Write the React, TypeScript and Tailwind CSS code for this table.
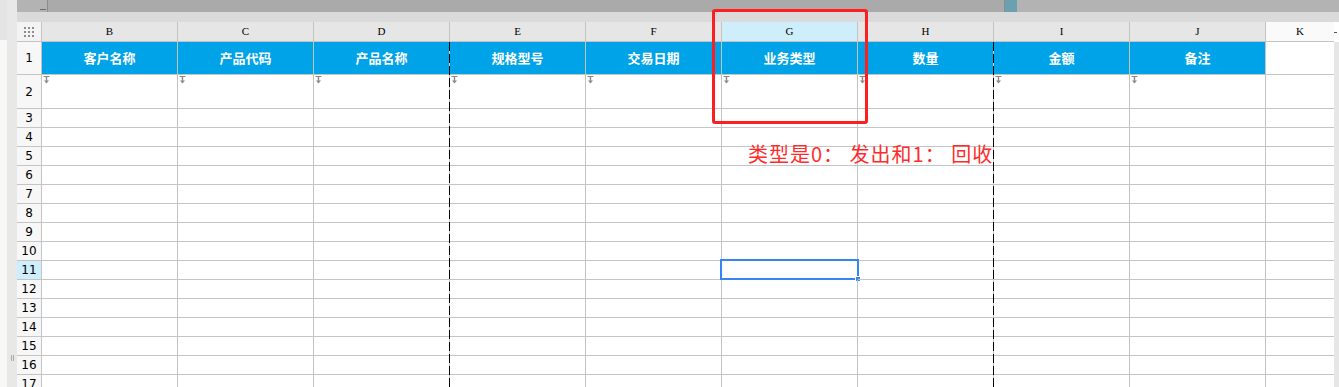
import type { ReactNode } from "react";

const COLUMNS = [
  { key: "B", title: "客户名称" },
  { key: "C", title: "产品代码" },
  { key: "D", title: "产品名称" },
  { key: "E", title: "规格型号" },
  { key: "F", title: "交易日期" },
  { key: "G", title: "业务类型" },
  { key: "H", title: "数量" },
  { key: "I", title: "金额" },
  { key: "J", title: "备注" },
];

const BODY_ROWS = [3, 4, 5, 6, 7, 8, 9, 10, 11, 12, 13, 14, 15, 16, 17];

const CJK = "font-['Noto_Sans_CJK_SC',sans-serif]";

function FilterArrow() {
  return (
    <svg width="7" height="8" viewBox="0 0 7 8" className="absolute left-[1px] top-[1px]">
      <path d="M0.5 0.5h6" stroke="#8a8a8a" strokeWidth="1" />
      <path d="M3.5 0.5v5" stroke="#8a8a8a" strokeWidth="1.4" />
      <path d="M1 4.5l2.5 3 2.5-3z" fill="#8a8a8a" />
    </svg>
  );
}

function RowHeader({ n, active, h }: { n: number; active?: boolean; h: string }) {
  return (
    <div
      className={`w-[25px] ${h} shrink-0 flex items-center justify-center border-r border-b border-[#c4c4c4] text-[12px] text-black font-['DejaVu_Sans',sans-serif] ${
        active ? "bg-[#cdeefa]" : "bg-[#f7f7f7]"
      }`}
    >
      {n}
    </div>
  );
}

function Cell({ children, className = "" }: { children?: ReactNode; className?: string }) {
  return <div className={`w-[136px] shrink-0 border-r border-b border-[#c4c4c4] relative ${className}`}>{children}</div>;
}

function PageBreak({ left }: { left: string }) {
  return (
    <div
      className={`absolute top-0 bottom-0 ${left} w-[1px] bg-[repeating-linear-gradient(to_bottom,#000_0_9px,transparent_9px_12px)]`}
    />
  );
}

export default function App() {
  return (
    <div className="relative w-[1339px] h-[387px] overflow-hidden bg-white flex">
      {/* window edge */}
      <div className="w-[17px] shrink-0 flex">
        <div className="w-[7px] flex flex-col">
          <div className="h-[40px] shrink-0 bg-[#e4e4e4]" />
          <div className="flex-1 bg-[#f8f8f6]" />
        </div>
        <div className="w-[10px] bg-[#e8e8e8] flex flex-col items-center justify-end pb-[26px]">
          <div className="flex gap-[1px]">
            <span className="w-[1px] h-[6px] bg-[#a8a8a8]" />
            <span className="w-[1px] h-[6px] bg-[#a8a8a8]" />
          </div>
        </div>
      </div>

      <div className="flex-1 flex flex-col min-h-0">
        {/* toolbar strip */}
        <div className="h-[12px] shrink-0 bg-[#b3b3b3] flex">
          <div className="w-[30px] flex items-end pb-[2px] justify-end pr-[1px]">
            <span className="w-[6px] h-[1px] bg-[#6f6f6f]" />
          </div>
          <div className="w-[958px] bg-[#aaaaaa] border-x border-[#8c8c8c]" />
          <div className="w-[12px] bg-[#6aa1b1]" />
          <div className="flex-1" />
        </div>
        <div className="h-[10px] shrink-0 bg-[#dadada]" />

        <div className="flex flex-1 min-h-0 overflow-hidden">
          <div className="w-[1317px] flex flex-col">
            {/* column letters */}
            <div className="flex h-[20px] shrink-0">
              <div className="w-[25px] shrink-0 bg-[#f3f3f3] border-r border-b border-[#c4c4c4] flex items-center justify-center">
                <div className="grid grid-cols-3 gap-[2px]">
                  {Array.from({ length: 9 }).map((_, i) => (
                    <span key={i} className="w-[2px] h-[2px] bg-[#8c8c8c]" />
                  ))}
                </div>
              </div>
              {COLUMNS.map((c) => (
                <div
                  key={c.key}
                  className={`w-[136px] shrink-0 border-r border-b border-[#c4c4c4] flex items-center justify-center text-[11px] text-black font-['Liberation_Serif',serif] ${
                    c.key === "G" ? "bg-[#cdeefa]" : "bg-[#e6e6e6]"
                  }`}
                >
                  {c.key}
                </div>
              ))}
              <div className="w-[68px] shrink-0 bg-[#fafafa] border-b border-[#c4c4c4] flex items-center justify-center text-[11px] text-black font-['Liberation_Serif',serif]">
                K
              </div>
            </div>

            <div className="relative flex-1 min-h-0">
              {/* row 1: titles */}
              <div className="flex h-[33px] shrink-0">
                <RowHeader n={1} h="h-[33px]" />
                {COLUMNS.map((c) => (
                  <Cell key={c.key} className="bg-[#00a3e8] flex items-center justify-center">
                    <span className={`${CJK} text-[13px] font-bold text-white`}>{c.title}</span>
                  </Cell>
                ))}
                <div className="w-[68px] shrink-0 border-b border-[#c4c4c4]" />
              </div>

              {/* row 2: filter row */}
              <div className="flex h-[34px] shrink-0">
                <RowHeader n={2} h="h-[34px]" />
                {COLUMNS.map((c) => (
                  <Cell key={c.key}>
                    <FilterArrow />
                  </Cell>
                ))}
                <div className="w-[68px] shrink-0 border-b border-[#c4c4c4]" />
              </div>

              {BODY_ROWS.map((n) => (
                <div key={n} className="flex h-[19px] shrink-0">
                  <RowHeader n={n} h="h-[19px]" active={n === 11} />
                  {COLUMNS.map((c) => (
                    <Cell key={c.key}>
                      {n === 11 && c.key === "G" && (
                        <div className="absolute left-[-2px] top-[-2px] w-[139px] h-[21px] border-2 border-[#3587f0]">
                          <span className="absolute right-[-4px] bottom-[-4px] w-[6px] h-[6px] bg-[#3587f0] border border-white" />
                        </div>
                      )}
                    </Cell>
                  ))}
                  <div className="w-[68px] shrink-0 border-b border-[#c4c4c4]" />
                </div>
              ))}

              <PageBreak left="left-[432px]" />
              <PageBreak left="left-[976px]" />
            </div>
          </div>

          {/* vertical scrollbar */}
          <div className="w-[5px] flex flex-col">
            <div className="h-[20px] shrink-0 bg-white flex items-center">
              <span className="w-[3px] h-[1px] bg-[#555]" />
            </div>
            <div className="flex-1 bg-[#e6e6e6]" />
          </div>
        </div>
      </div>

      {/* annotation */}
      <div className="absolute left-[712px] top-[9px] w-[156px] h-[115px] border-[3px] border-[#fd1f1f] rounded-[3px]" />
      <div className={`absolute left-[748px] top-[140px] text-[20px] leading-[27px] tracking-[1px] text-[#ff2b2b] ${CJK}`}>
        类型是0： 发出和1： 回收
      </div>
    </div>
  );
}
